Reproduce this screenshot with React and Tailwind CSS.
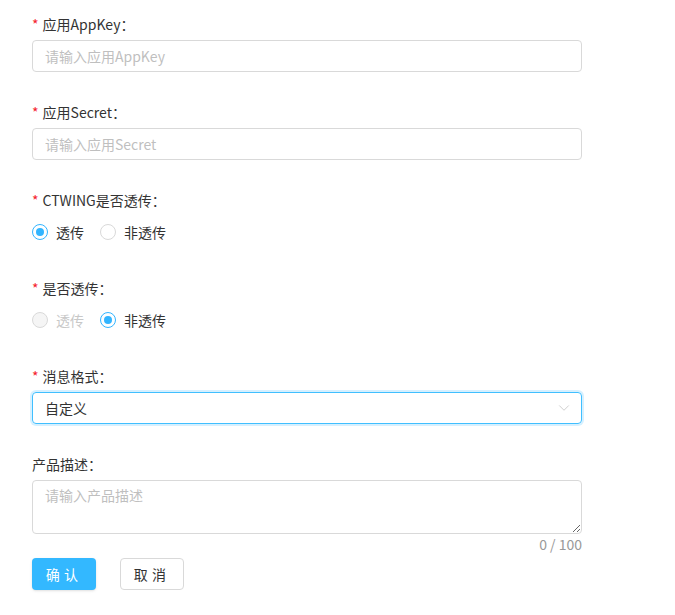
import { ChevronDown } from 'lucide-react';

const font = { fontFamily: '"Noto Sans CJK SC", "Noto Sans", sans-serif' };

function Label({ required, children }) {
  return (
    <div className="flex h-6 items-center text-sm text-[#333]">
      {required && <span className="mr-1 text-[#f5222d]">*</span>}
      {children}
    </div>
  );
}

function Radio({ label, checked, disabled }) {
  return (
    <label className="flex items-center gap-2">
      <span
        className={
          'flex h-4 w-4 items-center justify-center rounded-full border ' +
          (disabled ? 'border-[#d9d9d9] bg-[#f5f5f5]' : checked ? 'border-[#33b5ff] bg-white' : 'border-[#d9d9d9] bg-white')
        }
      >
        {checked && <span className="h-2 w-2 rounded-full bg-[#33b5ff]" />}
      </span>
      <span className={'text-sm ' + (disabled ? 'text-[#c8c8c8]' : 'text-[#333]')}>{label}</span>
    </label>
  );
}

function Field({ children }) {
  return <div className="mb-7 flex flex-col gap-1">{children}</div>;
}

export default function App() {
  return (
    <div className="min-h-screen bg-white pl-8 pt-3" style={font}>
      <div className="w-[550px]">
        <Field>
          <Label required>应用AppKey：</Label>
          <input
            className="h-8 w-full rounded-sm border border-[#d9d9d9] px-3 text-sm outline-none placeholder:text-[#bfbfbf]"
            placeholder="请输入应用AppKey"
          />
        </Field>

        <Field>
          <Label required>应用Secret：</Label>
          <input
            className="h-8 w-full rounded-sm border border-[#d9d9d9] px-3 text-sm outline-none placeholder:text-[#bfbfbf]"
            placeholder="请输入应用Secret"
          />
        </Field>

        <Field>
          <Label required>CTWING是否透传：</Label>
          <div className="flex h-8 items-center gap-4">
            <Radio label="透传" checked />
            <Radio label="非透传" />
          </div>
        </Field>

        <Field>
          <Label required>是否透传：</Label>
          <div className="flex h-8 items-center gap-4">
            <Radio label="透传" disabled />
            <Radio label="非透传" checked />
          </div>
        </Field>

        <Field>
          <Label required>消息格式：</Label>
          <div className="flex h-8 w-full items-center justify-between rounded-sm border border-[#40bfff] pl-3 pr-2 text-sm text-[#333] shadow-[0_0_0_2px_rgba(51,181,255,0.2)]">
            <span>自定义</span>
            <ChevronDown size={18} strokeWidth={1} className="text-[#bfbfbf]" />
          </div>
        </Field>

        <div className="flex flex-col gap-1">
          <Label>产品描述：</Label>
          <textarea
            className="block h-[54px] w-full resize-y rounded-sm border border-[#d9d9d9] px-3 py-1 text-sm outline-none placeholder:text-[#bfbfbf]"
            placeholder="请输入产品描述"
          />
        </div>
        <div className="text-right text-sm leading-5 text-[#999]">0 / 100</div>

        <div className="mt-1 flex gap-6">
          <button className="h-8 w-16 rounded-sm bg-[#33b8ff] text-sm tracking-[0.3em] text-white shadow-sm">确认</button>
          <button className="h-8 w-16 rounded-sm border border-[#d9d9d9] bg-white text-sm tracking-[0.3em] text-[#333]">取消</button>
        </div>
      </div>
    </div>
  );
}
